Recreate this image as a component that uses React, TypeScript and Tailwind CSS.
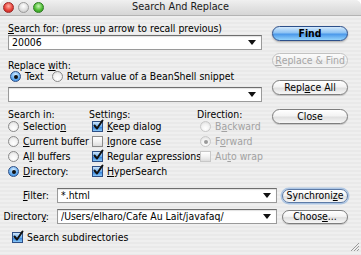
import type { ReactNode } from 'react';

// Mac OS X (Aqua) style Search And Replace dialog

const font = "font-['DejaVu_Sans_Condensed','Liberation_Sans',sans-serif]";

function U({ children }: { children: ReactNode }) {
  return <span className="underline underline-offset-[1px] decoration-[1px]">{children}</span>;
}

function Arrow() {
  return (
    <svg width="8" height="5" viewBox="0 0 8 5" className="shrink-0">
      <path d="M0 0 H8 L4 5 Z" fill="#111" />
    </svg>
  );
}

function Combo({ value, width }: { value: string; width: string }) {
  return (
    <div
      className={`flex items-center h-[15px] ${width} bg-white border border-[#9a9a9a] border-t-[#6e6e6e] shadow-[inset_0_1px_1px_rgba(0,0,0,0.12)] pl-[3px] pr-[5px]`}
    >
      <span className="flex-1 leading-none text-black truncate">{value}</span>
      <Arrow />
    </div>
  );
}

const plain =
  'bg-[linear-gradient(180deg,#ffffff_0%,#f3f3f3_45%,#e0e0e0_55%,#f6f6f6_100%)] border border-[#7d7d7d] text-black shadow-[0_1px_1px_rgba(0,0,0,0.18)]';

function Button({ children, primary, disabled }: { children: ReactNode; primary?: boolean; disabled?: boolean }) {
  let look = plain;
  if (primary)
    look =
      'bg-[linear-gradient(180deg,#d4e9fc_0%,#8cc2f3_45%,#4a98ea_55%,#93d3fb_100%)] border border-[#2c4f8a] text-black font-bold shadow-[0_1px_2px_rgba(0,0,0,0.3)]';
  if (disabled)
    look =
      'bg-[linear-gradient(180deg,#fbfbfb_0%,#f2f2f2_50%,#eaeaea_55%,#f5f5f5_100%)] border border-[#c2c2c2] text-[#a6a6a6]';
  return (
    <div className={`flex items-center justify-center rounded-full leading-none whitespace-nowrap w-[76px] h-[15px] ${look}`}>
      {children}
    </div>
  );
}

function Radio({ on, disabled }: { on?: boolean; disabled?: boolean }) {
  if (on && !disabled)
    return (
      <span className="w-[11px] h-[11px] rounded-full shrink-0 flex items-center justify-center border border-[#2d4f86] bg-[radial-gradient(circle_at_50%_30%,#d5ebff_0%,#6cb1f2_55%,#2f7fd8_100%)]">
        <span className="w-[4px] h-[4px] rounded-full bg-[#111]" />
      </span>
    );
  return (
    <span
      className={`w-[11px] h-[11px] rounded-full shrink-0 flex items-center justify-center border ${
        disabled ? 'border-[#c8c8c8]' : 'border-[#8a8a8a]'
      } bg-[radial-gradient(circle_at_50%_70%,#ffffff_0%,#f2f2f2_50%,#d8d8d8_100%)]`}
    >
      {on && <span className="w-[4px] h-[4px] rounded-full bg-[#9a9a9a]" />}
    </span>
  );
}

function Check({ on, disabled }: { on?: boolean; disabled?: boolean }) {
  if (on)
    return (
      <span className="relative w-[11px] h-[11px] shrink-0 border border-[#2d4f86] bg-[linear-gradient(180deg,#cfe6fb_0%,#6fb0ef_50%,#3a88e0_60%,#8ac8f7_100%)]">
        <svg width="12" height="12" viewBox="0 0 12 12" className="absolute -left-[1px] -top-[3px]">
          <path d="M2.5 6.5 L5 9.5 L10.5 1.5" fill="none" stroke="#111" strokeWidth="2" strokeLinecap="round" strokeLinejoin="round" />
        </svg>
      </span>
    );
  return (
    <span
      className={`w-[11px] h-[11px] shrink-0 border ${
        disabled ? 'border-[#c8c8c8]' : 'border-[#8a8a8a]'
      } bg-[linear-gradient(180deg,#ffffff_0%,#f2f2f2_50%,#dcdcdc_100%)]`}
    />
  );
}

function Opt({ ctl, children, disabled }: { ctl: ReactNode; children: ReactNode; disabled?: boolean }) {
  return (
    <div className={`flex items-center gap-[4px] h-[15px] ${disabled ? 'text-[#a2a2a2]' : 'text-black'}`}>
      {ctl}
      <span className="whitespace-nowrap">{children}</span>
    </div>
  );
}

export default function App() {
  return (
    <div className={`${font} w-[361px] h-[255px] overflow-hidden bg-white text-[10.4px] leading-none text-black`}>
      <div className="w-full h-full rounded-t-[6px] overflow-hidden flex flex-col bg-[repeating-linear-gradient(180deg,#efefef_0px,#efefef_2px,#e9e9e9_2px,#e9e9e9_4px)]">
        {/* Title bar */}
        <div className="relative h-[16px] shrink-0 flex items-center justify-center bg-[linear-gradient(180deg,#f0f0f0_0%,#e2e2e2_50%,#d6d6d6_100%)] border-b border-[#b4b4b4]">
          <div className="absolute left-[3px] top-[2px] flex gap-[4px]">
            <span className="w-[11px] h-[11px] rounded-full border border-[#9b2a2a] bg-[radial-gradient(circle_at_50%_35%,#ffb3a8_0%,#e8433a_55%,#b71d17_100%)]" />
            <span className="w-[11px] h-[11px] rounded-full border border-[#9a9a9a] bg-[radial-gradient(circle_at_50%_35%,#ffffff_0%,#dcdcdc_60%,#bdbdbd_100%)]" />
            <span className="w-[11px] h-[11px] rounded-full border border-[#2d7a22] bg-[radial-gradient(circle_at_50%_35%,#c8f5b5_0%,#4fbd35_55%,#2a8a1c_100%)]" />
          </div>
          <span className="text-[10.8px] text-[#1a1a1a]">Search And Replace</span>
        </div>

        {/* Top: fields, options + buttons */}
        <div className="flex pl-[8px] pt-[7px]">
          <div className="w-[254px] flex flex-col">
            <div className="h-[10px] whitespace-nowrap">
              <U>S</U>earch for: (press up arrow to recall previous)
            </div>
            <div className="mt-[2px]">
              <Combo value="20006" width="w-[254px]" />
            </div>
            <div className="mt-[10px] h-[10px]">
              Replace <U>w</U>ith:
            </div>
            <div className="h-[13px] flex items-center gap-[8px] pl-[2px]">
              <Opt ctl={<Radio on />}>Text</Opt>
              <Opt ctl={<Radio />}>Return value of a BeanShell snippet</Opt>
            </div>
            <div className="mt-[4px]">
              <Combo value="" width="w-[254px]" />
            </div>

            {/* Options */}
            <div className="mt-[7px] grid grid-cols-[81px_108px_1fr]">
              <div className="flex flex-col">
                <div className="h-[10px] whitespace-nowrap">Search in:</div>
                <Opt ctl={<Radio />}>
                  Selectio<U>n</U>
                </Opt>
                <Opt ctl={<Radio />}>
                  <U>C</U>urrent buffer
                </Opt>
                <Opt ctl={<Radio />}>
                  A<U>l</U>l buffers
                </Opt>
                <Opt ctl={<Radio on />}>
                  <U>D</U>irectory:
                </Opt>
              </div>
              <div className="flex flex-col">
                <div className="h-[10px] whitespace-nowrap">Settings:</div>
                <div className="pl-[3px] flex flex-col">
                  <Opt ctl={<Check on />}>
                    <U>K</U>eep dialog
                  </Opt>
                  <Opt ctl={<Check />}>
                    <U>I</U>gnore case
                  </Opt>
                  <Opt ctl={<Check on />}>
                    Regular e<U>x</U>pressions
                  </Opt>
                  <Opt ctl={<Check on />}>
                    <U>H</U>yperSearch
                  </Opt>
                </div>
              </div>
              <div className="flex flex-col">
                <div className="h-[10px] whitespace-nowrap">Direction:</div>
                <div className="pl-[3px] flex flex-col">
                  <Opt disabled ctl={<Radio disabled />}>
                    B<U>a</U>ckward
                  </Opt>
                  <Opt disabled ctl={<Radio on disabled />}>
                    F<U>o</U>rward
                  </Opt>
                  <Opt disabled ctl={<Check disabled />}>
                    Au<U>t</U>o wrap
                  </Opt>
                </div>
              </div>
            </div>
          </div>

          <div className="ml-[10px] mt-[3px] flex flex-col">
            <Button primary>Find</Button>
            <div className="mt-[12px]">
              <Button disabled>
                <U>R</U>eplace &amp; Find
              </Button>
            </div>
            <div className="mt-[12px]">
              <Button>
                Repl<U>a</U>ce All
              </Button>
            </div>
            <div className="mt-[14px]">
              <Button>Close</Button>
            </div>
          </div>
        </div>

        {/* Filter / directory */}
        <div className="mt-[9px] flex flex-col gap-[6px]">
          <div className="flex items-center">
            <div className="w-[49px] text-right">
              <U>F</U>ilter:
            </div>
            <div className="ml-[8px]">
              <Combo value="*.html" width="w-[220px]" />
            </div>
            <div className="ml-[5px] flex items-center justify-center rounded-full h-[14px] w-[66px] border border-[#5c7aa6] shadow-[0_0_0_1.5px_rgba(110,160,220,0.5)] bg-[linear-gradient(180deg,#ffffff_0%,#f3f3f3_45%,#e0e0e0_55%,#f6f6f6_100%)]">
              Synchroni<U>z</U>e
            </div>
          </div>
          <div className="flex items-center">
            <div className="w-[49px] text-right">
              Director<U>y</U>:
            </div>
            <div className="ml-[8px]">
              <Combo value="/Users/elharo/Cafe Au Lait/javafaq/" width="w-[220px]" />
            </div>
            <div className="ml-[5px] flex items-center justify-center rounded-full h-[14px] w-[66px] border border-[#7d7d7d] shadow-[0_1px_1px_rgba(0,0,0,0.18)] bg-[linear-gradient(180deg,#ffffff_0%,#f3f3f3_45%,#e0e0e0_55%,#f6f6f6_100%)]">
              Choos<U>e</U>...
            </div>
          </div>
        </div>

        <div className="relative flex-1 pl-[12px] pt-[6px]">
          <Opt ctl={<Check on />}>Search subdirectories</Opt>
          <svg width="8" height="8" viewBox="0 0 8 8" className="absolute right-[2px] bottom-[4px]">
            <path d="M8 0 L0 8 M8 3 L3 8 M8 6 L6 8" stroke="#9a9a9a" strokeWidth="1" />
          </svg>
        </div>
      </div>
    </div>
  );
}
